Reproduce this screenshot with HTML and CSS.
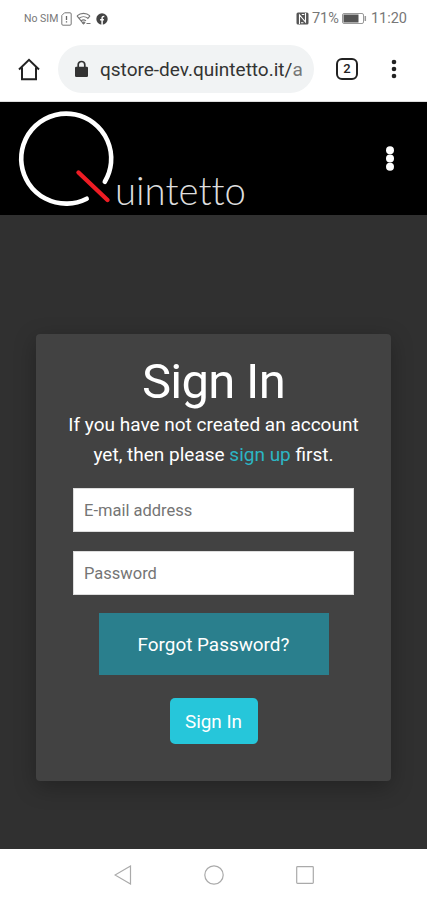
FILE: index.html
```html
<!DOCTYPE html>
<html lang="en">
<head>
<meta charset="UTF-8" />
<meta name="viewport" content="width=device-width, initial-scale=1" />
<title>Quintetto - Sign In</title>
<link rel="stylesheet" href="styles.css">
</head>
<body>
  <div class="status">
    <span class="sim">No SIM</span>
    <svg class="sim-icon" width="11" height="14" viewBox="0 0 11 14">
      <path d="M3.5 .8H9a1.2 1.2 0 0 1 1.2 1.2v10A1.2 1.2 0 0 1 9 13.2H2A1.2 1.2 0 0 1 .8 12V3.5z" fill="none" stroke="#777"/>
      <path d="M5.5 4v4M5.5 9.3v1.3" stroke="#666" stroke-width="1.3"/>
    </svg>
    <svg class="wifi" width="16" height="15" viewBox="0 0 16 15" fill="none" stroke="#777" stroke-width="1.1">
      <path d="M1 4.8a10 10 0 0 1 13 0M3 7.4a7 7 0 0 1 9 0M5 9.9a4 4 0 0 1 5 0M1 4.8l6.5 8 1.7-2M14 4.8l-2.5 3M10.5 12.5h4"/>
      <circle cx="7.5" cy="11.8" r=".7"/>
    </svg>
    <svg class="fb" width="12" height="12" viewBox="0 0 12 12">
      <circle cx="6" cy="6" r="5.7" fill="#444"/>
      <path d="M6.1 12V5.2q0-2 2.2-1.7M4.1 6.8h3.8" fill="none" stroke="#fff" stroke-width="1.5"/>
    </svg>
    <svg class="nfc" width="13" height="13" viewBox="0 0 13 13">
      <rect x=".5" y=".5" width="12" height="12" rx="1.5" fill="#555"/>
      <path d="M3.5 12V3l6 7V1M5.8 2.5h2.5M5 10.7h2.4" fill="none" stroke="#fff" stroke-width="1.1"/>
    </svg>
    <span class="percent">71%</span>
    <svg class="battery" width="25" height="11" viewBox="0 0 25 11">
      <rect x=".5" y=".5" width="21" height="10" rx="1.5" fill="#fff" stroke="#999"/>
      <rect x="1.5" y="1.5" width="15" height="8" fill="#555"/>
      <path d="M23.3 3v5" stroke="#999" stroke-width="1.5"/>
    </svg>
    <span class="clock">11:20</span>
  </div>

  <div class="browser">
    <svg class="home" width="22" height="23" viewBox="0 0 22 23">
      <path d="M1 11.5L11 1.8l10 9.7M4 9.5v11.7h14V9.5" fill="none" stroke="#222" stroke-width="2"/>
    </svg>
    <div class="url">
      <svg width="13" height="18" viewBox="0 0 13 18">
        <path d="M3.2 8V4.8a3.3 3.3 0 0 1 6.6 0V8" fill="none" stroke="#333" stroke-width="1.7"/>
        <rect y="6.7" width="13" height="10.3" rx="1.3" fill="#333"/>
      </svg>
      <span>qstore-dev.quintetto.it/<span class="fade">a</span></span>
    </div>
    <div class="tabs">2</div>
    <svg class="dots" width="6" height="20" viewBox="0 0 6 20" fill="#222">
      <circle cx="3" cy="3" r="2.3"/>
      <circle cx="3" cy="10" r="2.3"/>
      <circle cx="3" cy="17" r="2.3"/>
    </svg>
  </div>

  <header>
    <svg class="logo" width="250" height="112" viewBox="0 0 250 112">
      <path d="M86.7 95.7A45 45 0 1 1 104.8 78.8" fill="none" stroke="#fff" stroke-width="4.6" stroke-linecap="round"/>
      <path d="M78.5 69.5L107.5 97" stroke="#ed1c24" stroke-width="4.4" stroke-linecap="round"/>
      <text x="115" y="102" textLength="131" lengthAdjust="spacingAndGlyphs">uintetto</text>
    </svg>
    <svg class="menu" width="10" height="26" viewBox="0 0 10 26" fill="#fff">
      <circle cx="5" cy="4.3" r="4"/>
      <circle cx="5" cy="12.5" r="4"/>
      <circle cx="5" cy="20.7" r="4"/>
    </svg>
  </header>

  <main>
    <form class="card">
      <h1>Sign In</h1>
      <p>If you have not created an account<br>yet, then please <a href="#">sign up</a> first.</p>
      <input type="email" placeholder="E-mail address">
      <input type="password" placeholder="Password">
      <button type="button" class="forgot">Forgot Password?</button>
      <button type="button" class="signin">Sign In</button>
    </form>
  </main>

  <nav>
    <svg width="18" height="20" viewBox="0 0 18 20"><path d="M16.5 1v18L1 10z"/></svg>
    <svg width="20" height="20" viewBox="0 0 20 20"><circle cx="10" cy="10" r="9.2"/></svg>
    <svg width="18" height="18" viewBox="0 0 18 18"><rect x=".7" y=".7" width="16.6" height="16.6" rx=".8"/></svg>
  </nav>
</body>
</html>
```
FILE: styles.css
```css
* {
  box-sizing: border-box;
}
body {
  margin: 0;
  height: 900px;
  display: flex;
  flex-direction: column;
  background: #fff;
  font-family: Roboto, sans-serif;
  overflow: hidden;
}
svg {
  display: block;
  flex: none;
}
.status {
  height: 37px;
  display: flex;
  align-items: center;
  padding: 0 20px 0 24px;
  color: #777;
  white-space: nowrap;
}
.sim {
  font-size: 10.5px;
  width: 37px;
}
.wifi {
  margin-left: 4px;
}
.fb {
  margin-left: 4px;
}
.nfc {
  margin-left: auto;
}
.percent {
  font-size: 14.5px;
  width: 27px;
  margin-left: 3px;
}
.battery {
  margin-left: 3px;
}
.clock {
  font-size: 14.5px;
  margin-left: 4px;
}
.browser {
  height: 65px;
  display: flex;
  align-items: center;
  padding: 0 0 0 18px;
  border-bottom: 1px solid #ddd;
}
.url {
  width: 256px;
  height: 48px;
  margin-left: 18px;
  padding-left: 17px;
  display: flex;
  align-items: center;
  gap: 12px;
  border-radius: 24px;
  background: #f1f3f4;
  color: #333;
  font-size: 19px;
  white-space: nowrap;
}
.fade {
  color: #777;
}
.tabs {
  width: 22px;
  height: 22px;
  margin-left: 22px;
  border: 2px solid #222;
  border-radius: 6px;
  color: #222;
  font-size: 13px;
  font-weight: 500;
  line-height: 18px;
  text-align: center;
}
.dots {
  margin-left: 33px;
}
header {
  height: 113px;
  display: flex;
  justify-content: space-between;
  align-items: center;
  padding-right: 32px;
  background: #000;
}
.logo text {
  font-family: Lato, sans-serif;
  font-weight: 300;
  font-size: 38.5px;
  font-variant-ligatures: none;
  fill: #ddd;
}
main {
  height: 634px;
  padding-top: 119px;
  background: #303030;
}
.card {
  width: 355px;
  height: 447px;
  margin: 0 auto;
  padding-top: 19px;
  display: flex;
  flex-direction: column;
  align-items: center;
  border-radius: 4px;
  background: #424242;
  box-shadow: 0 6px 22px rgba(0, 0, 0, 0.28);
  color: #fff;
}
h1 {
  margin: 0;
  font-size: 49px;
  font-weight: 400;
  line-height: 57px;
  letter-spacing: -0.7px;
}
p {
  margin: 0 0 18px;
  font-size: 19px;
  line-height: 30px;
  text-align: center;
  white-space: nowrap;
}
a {
  color: #2cb5c4;
  text-decoration: none;
}
input {
  width: 281px;
  height: 44px;
  margin: 0 0 19px;
  padding: 0 10px;
  border: 1px solid #ddd;
  border-radius: 0;
  background: #fff;
  font-family: inherit;
  font-size: 16.5px;
}
input::placeholder {
  color: #757575;
}
button {
  padding: 0;
  border: 0;
  color: #fff;
  font-family: inherit;
  font-size: 18.9px;
}
.forgot {
  width: 230px;
  height: 62px;
  margin-top: -1px;
  background: #2a7f8d;
}
.signin {
  width: 88px;
  height: 46px;
  margin-top: 23px;
  border-radius: 5px;
  background: #26c6da;
}
nav {
  height: 51px;
  display: flex;
  justify-content: center;
  align-items: center;
  gap: 72px;
}
nav svg {
  fill: none;
  stroke: #aaa;
  stroke-width: 1.2;
}
```
